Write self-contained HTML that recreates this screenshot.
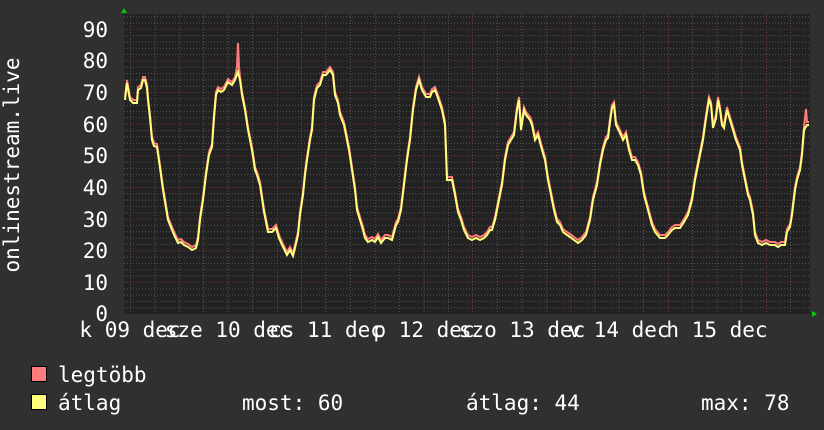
<!DOCTYPE html>
<html><head><meta charset="utf-8"><style>
body{margin:0;background:#303030;}
svg{display:block}
text{font-family:"DejaVu Sans Mono","Liberation Mono",monospace;font-size:21px;fill:#fff}
</style></head><body>
<svg width="824" height="430" viewBox="0 0 824 430" xmlns="http://www.w3.org/2000/svg">
<rect width="824" height="430" fill="#303030"/>
<rect x="124" y="14" width="686" height="300" fill="#222"/>
<g stroke="#555" stroke-width="1" stroke-dasharray="1,2">
<path d="M124 307.7H810M124 301.4H810M124 295.0H810M124 288.7H810M124 276.1H810M124 269.7H810M124 263.4H810M124 257.1H810M124 244.4H810M124 238.1H810M124 231.8H810M124 225.4H810M124 212.8H810M124 206.5H810M124 200.1H810M124 193.8H810M124 181.2H810M124 174.8H810M124 168.5H810M124 162.2H810M124 149.5H810M124 143.2H810M124 136.9H810M124 130.6H810M124 117.9H810M124 111.6H810M124 105.2H810M124 98.9H810M124 86.3H810M124 79.9H810M124 73.6H810M124 67.3H810M124 54.6H810M124 48.3H810M124 42.0H810M124 35.6H810M124 23.0H810M124 16.7H810"/>
<path d="M130.5 14V314M155 14V314M203.5 14V314M228 14V314M252.5 14V314M301.5 14V314M326 14V314M350.5 14V314M399.5 14V314M424 14V314M448.5 14V314M497.5 14V314M522 14V314M546.5 14V314M594.5 14V314M619 14V314M643.5 14V314M692.5 14V314M717 14V314M741.5 14V314M790.5 14V314"/>
</g>
<g stroke="#7a3a3a" stroke-width="1" stroke-dasharray="1,2">
<path d="M124 282.4H810M124 250.8H810M124 219.1H810M124 187.5H810M124 155.9H810M124 124.2H810M124 92.6H810M124 60.9H810M124 29.3H810"/>
<path d="M179.5 14V314M277.5 14V314M375.5 14V314M472.5 14V314M570.5 14V314M668.5 14V314M766.5 14V314"/>
</g>
<g fill="none" stroke-width="2" stroke-linejoin="miter">
<polyline id="d" transform="translate(0,-3)" stroke="#ff7c7c" points="125,100 127,83 130,100 133,103 137,103 138,90 141,88 143,80 145,80 147,88 148,100 150,118 152,140 154,146 157,147 160,168 163,190 165,202 168,220 172,230 175,237 178,243 181,242 184,245 188,247 192,250 196,248 198,240 200,220 203,200 206,175 209,155 212,147 214,118 216,95 218,90 221,92 224,90 228,82 232,85 235,80 237,70 238,46 239,70 240,80 242,95 245,110 248,130 252,150 255,170 257,175 260,185 264,212 268,232 272,232 276,228 279,238 283,247 287,255 290,250 293,256 295,248 298,235 300,215 303,195 305,175 307,160 310,140 312,130 314,100 317,88 320,85 323,75 326,75 330,70 333,75 335,95 338,103 340,115 344,125 346,135 349,150 352,170 355,190 357,210 360,220 363,230 365,238 368,242 372,240 375,242 378,237 381,243 385,238 388,238 392,240 396,225 398,222 401,210 404,185 407,160 410,140 413,110 416,90 419,80 422,90 426,97 430,97 432,92 435,90 438,98 442,110 445,125 447,180 449,180 452,180 455,195 458,212 461,220 464,230 468,238 472,240 476,238 480,240 484,238 487,235 490,230 492,230 495,220 498,205 502,185 505,160 508,145 511,140 514,135 517,110 519,100 521,130 524,110 526,115 530,120 532,125 535,140 538,135 542,150 545,160 548,180 552,200 554,210 557,222 560,225 563,232 567,235 570,237 574,240 578,243 582,240 586,235 590,220 593,200 597,185 600,165 603,150 606,140 608,138 610,122 612,108 614,105 616,125 620,133 623,140 626,135 629,150 632,160 635,160 638,165 641,175 644,195 648,210 652,225 655,232 660,238 665,238 668,235 672,230 675,228 680,228 684,222 688,215 692,200 695,180 699,160 703,140 705,125 707,112 709,100 711,105 713,128 716,118 718,100 720,110 722,125 724,128 727,110 730,120 733,130 736,140 740,150 742,165 745,180 748,195 750,200 753,215 755,235 758,243 762,245 766,243 770,245 775,245 778,247 781,245 785,245 787,232 790,227 792,215 795,190 797,180 800,170 802,155 804,130 806,112 807,125 809,125"/>
<polyline stroke="#ffff7c" points="125,100 127,83 130,100 133,103 137,103 138,90 141,88 143,80 145,80 147,88 148,100 150,118 152,140 154,146 157,147 160,168 163,190 165,202 168,220 172,230 175,237 178,243 181,242 184,245 188,247 192,250 196,248 198,240 200,220 203,200 206,175 209,155 212,147 214,118 216,95 218,90 221,92 224,90 228,82 232,85 235,80 238,72 240,80 242,95 245,110 248,130 252,150 255,170 257,175 260,185 264,212 268,232 272,232 276,228 279,238 283,247 287,255 290,250 293,256 295,248 298,235 300,215 303,195 305,175 307,160 310,140 312,130 314,100 317,88 320,85 323,75 326,75 330,70 333,75 335,95 338,103 340,115 344,125 346,135 349,150 352,170 355,190 357,210 360,220 363,230 365,238 368,242 372,240 375,242 378,237 381,243 385,238 388,238 392,240 396,225 398,222 401,210 404,185 407,160 410,140 413,110 416,90 419,80 422,90 426,97 430,97 432,92 435,90 438,98 442,110 445,125 447,180 449,180 452,180 455,195 458,212 461,220 464,230 468,238 472,240 476,238 480,240 484,238 487,235 490,230 492,230 495,220 498,205 502,185 505,160 508,145 511,140 514,135 517,110 519,100 521,130 524,110 526,115 530,120 532,125 535,140 538,135 542,150 545,160 548,180 552,200 554,210 557,222 560,225 563,232 567,235 570,237 574,240 578,243 582,240 586,235 590,220 593,200 597,185 600,165 603,150 606,140 608,138 610,122 612,108 614,105 616,125 620,133 623,140 626,135 629,150 632,160 635,160 638,165 641,175 644,195 648,210 652,225 655,232 660,238 665,238 668,235 672,230 675,228 680,228 684,222 688,215 692,200 695,180 699,160 703,140 705,125 707,112 709,100 711,105 713,128 716,118 718,100 720,110 722,125 724,128 727,110 730,120 733,130 736,140 740,150 742,165 745,180 748,195 750,200 753,215 755,235 758,243 762,245 766,243 770,245 775,245 778,247 781,245 785,245 787,232 790,227 792,215 795,190 797,180 800,170 802,155 804,130 807,125 809,125"/>
</g>
<polygon points="121,13 127,13 124,8" fill="#0c0"/>
<polygon points="812,311 812,317 817,314" fill="#0c0"/>
<g text-anchor="end">
<text x="108" y="321">0</text><text x="108" y="290">10</text><text x="108" y="258">20</text><text x="108" y="227">30</text><text x="108" y="195">40</text><text x="108" y="163">50</text><text x="108" y="132">60</text><text x="108" y="100">70</text><text x="108" y="68">80</text><text x="108" y="37">90</text>
</g>
<text transform="translate(19,165) rotate(-90)" text-anchor="middle">onlinestream.live</text>
<g text-anchor="middle">
<text x="130" y="337">k 09 dec</text>
<text x="228" y="337">sze 10 dec</text>
<text x="326" y="337">cs 11 dec</text>
<text x="424" y="337">p 12 dec</text>
<text x="522" y="337">szo 13 dec</text>
<text x="619" y="337">v 14 dec</text>
<text x="717" y="337">h 15 dec</text>
</g>
<rect x="31.5" y="366.5" width="15" height="15" fill="#ff7c7c" stroke="#000"/>
<rect x="31.5" y="394.5" width="15" height="15" fill="#ffff7c" stroke="#000"/>
<text x="58" y="382">legtöbb</text>
<text x="58" y="410">átlag</text>
<text x="242" y="410">most: 60</text>
<text x="466" y="410">átlag: 44</text>
<text x="701" y="410">max: 78</text>
</svg>
</body></html>
